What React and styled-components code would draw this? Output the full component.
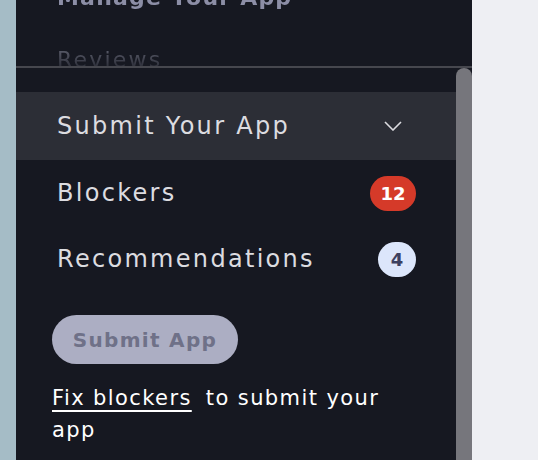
import React from 'react';
import styled, { createGlobalStyle } from 'styled-components';

const GlobalStyle = createGlobalStyle`
  html, body {
    margin: 0;
    padding: 0;
    height: 100%;
    overflow: hidden;
  }
  body {
    font-family: "DejaVu Sans", "Noto Sans", sans-serif;
  }
`;

/* Styled Components */

const Page = styled.div`
  display: flex;
  width: 538px;
  height: 460px;
  background-color: #eeeff3;
`;

const Backdrop = styled.div`
  width: 16px;
  background-color: #a5bcc6;
`;

const Panel = styled.div`
  display: flex;
  flex-direction: column;
  width: 456px;
  background-color: #161821;
  color: #dcdce0;
`;

const TopNav = styled.div`
  height: 66px;
  overflow: hidden;
  -webkit-mask-image: linear-gradient(to bottom, #000 65%, rgba(0, 0, 0, 0.3) 100%);
  mask-image: linear-gradient(to bottom, #000 65%, rgba(0, 0, 0, 0.3) 100%);
`;

const TopList = styled.div`
  margin-top: -34px;
  padding-left: 41px;
`;

const TopItem = styled.div`
  height: 62px;
  display: flex;
  align-items: center;
  font-size: 22px;
  letter-spacing: ${(props) => (props.bold ? '1.2px' : '2.2px')};
  font-weight: ${(props) => (props.bold ? 700 : 400)};
  color: ${(props) => (props.faded ? '#6b6d7c' : '#8c8ea6')};
`;

const Divider = styled.div`
  height: 2px;
  background-color: #46474e;
`;

const ScrollArea = styled.div`
  flex: 1;
  display: flex;
  overflow: hidden;
`;

const Content = styled.div`
  flex: 1;
  padding-top: 24px;
`;

const ScrollTrack = styled.div`
  width: 16px;
  display: flex;
`;

const ScrollThumb = styled.div`
  flex: 1;
  background-color: #76767c;
  border-radius: 8px 8px 0 0;
`;

const SectionHeader = styled.div`
  height: 68px;
  display: flex;
  align-items: center;
  justify-content: space-between;
  padding: 0 54px 0 41px;
  background-color: #2c2e36;
  font-size: 24px;
  letter-spacing: 2.3px;
  color: #dcdce0;
`;

const Row = styled.div`
  height: 66px;
  display: flex;
  align-items: center;
  justify-content: space-between;
  padding: 0 40px 0 41px;
  font-size: 24px;
  letter-spacing: 2.3px;
  color: #dcdce0;
`;

const Badge = styled.span`
  min-width: ${(props) => (props.variant === 'danger' ? '46px' : '38px')};
  height: 35px;
  box-sizing: border-box;
  padding: 0 8px;
  border-radius: 18px;
  display: inline-flex;
  align-items: center;
  justify-content: center;
  font-size: 18px;
  font-weight: 700;
  letter-spacing: 0;
  background-color: ${(props) => (props.variant === 'danger' ? '#d53a29' : '#dce6fb')};
  color: ${(props) => (props.variant === 'danger' ? '#ffffff' : '#3c4060')};
`;

const Footer = styled.div`
  padding: 23px 36px 0;
`;

const SubmitButton = styled.button`
  width: 186px;
  height: 49px;
  border: none;
  border-radius: 25px;
  background-color: #acaec3;
  color: #6f7188;
  font-family: inherit;
  font-size: 20px;
  font-weight: 700;
  letter-spacing: 1.3px;
  cursor: not-allowed;
`;

const Hint = styled.p`
  margin: 18px 0 0;
  font-size: 21px;
  line-height: 32px;
  letter-spacing: 1.4px;
  color: #ffffff;
  max-width: 360px;
`;

const HintLink = styled.a`
  color: #ffffff;
  text-decoration: underline;
  text-underline-offset: 5px;
  text-decoration-thickness: 2px;
  margin-right: 6px;
`;

const Chevron = () => (
  <svg width="18" height="10" viewBox="0 0 18 10" fill="none">
    <path d="M1 1l8 8 8-8" stroke="#dcdce0" strokeWidth="1.6" />
  </svg>
);

/* Main Component */

const App = () => (
  <Page>
    <GlobalStyle />
    <Backdrop />
    <Panel>
      <TopNav>
        <TopList>
          <TopItem bold>Manage Your App</TopItem>
          <TopItem faded>Reviews</TopItem>
        </TopList>
      </TopNav>
      <Divider />
      <ScrollArea>
        <Content>
          <SectionHeader>
            Submit Your App
            <Chevron />
          </SectionHeader>
          <Row>
            Blockers
            <Badge variant="danger">12</Badge>
          </Row>
          <Row>
            Recommendations
            <Badge>4</Badge>
          </Row>
          <Footer>
            <SubmitButton disabled>Submit App</SubmitButton>
            <Hint>
              <HintLink href="#">Fix blockers</HintLink>
              {' '}
              to submit your app
            </Hint>
          </Footer>
        </Content>
        <ScrollTrack>
          <ScrollThumb />
        </ScrollTrack>
      </ScrollArea>
    </Panel>
  </Page>
);

export default App;
